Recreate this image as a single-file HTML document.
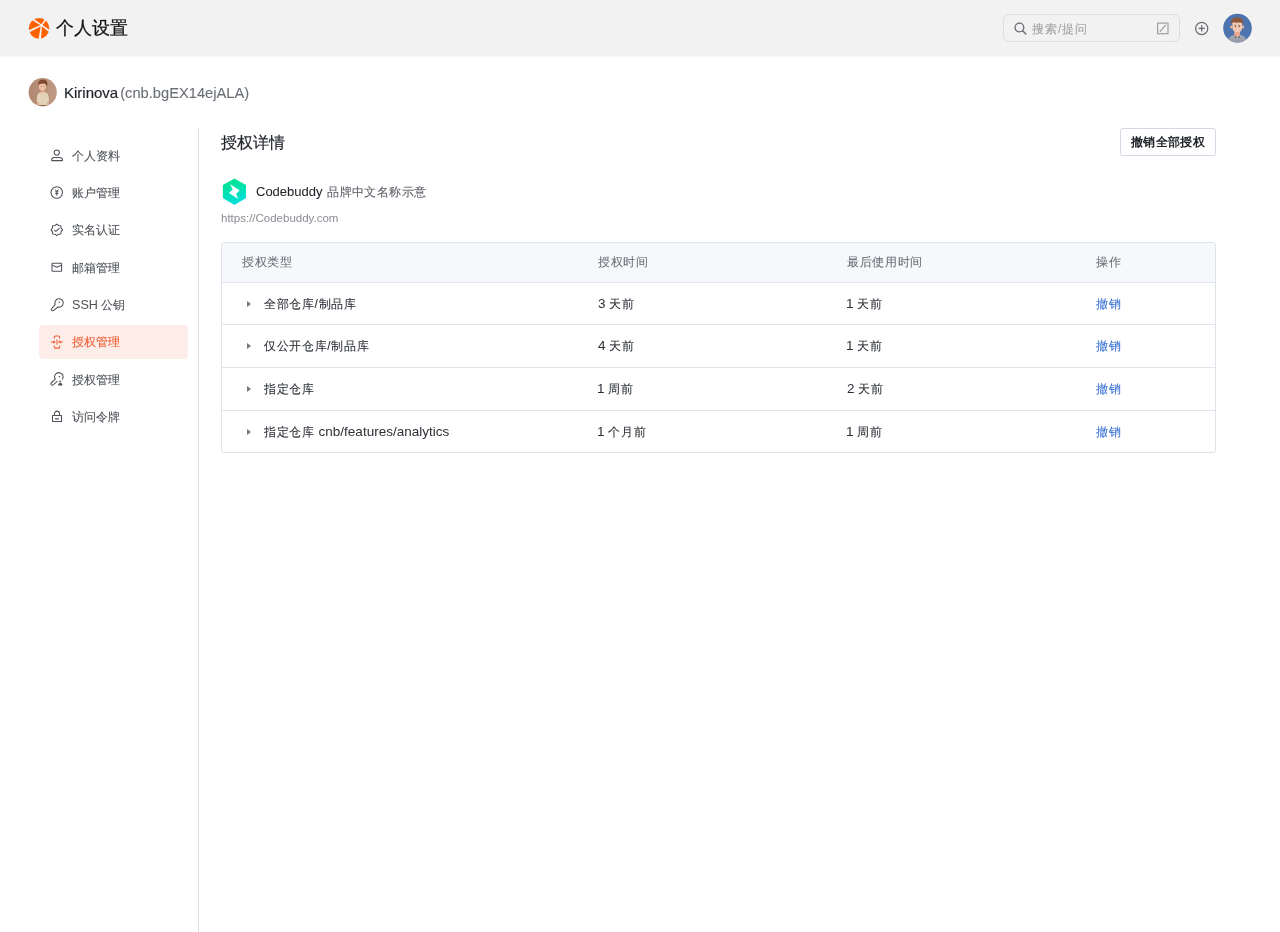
<!DOCTYPE html>
<html><head><meta charset="utf-8">
<style>
*{box-sizing:border-box;margin:0;padding:0}
html,body{width:1280px;height:932px;overflow:hidden;background:#fff;font-family:"Liberation Sans",sans-serif;color:#333}
.a{position:absolute;white-space:nowrap}
#hdr{left:0;top:0;width:1280px;height:56px;background:#f2f2f2}
#title{left:56px;top:16px;font-size:17.5px;line-height:24px;color:#111;-webkit-text-stroke:0.25px #111}
#search{left:1003px;top:14px;width:177px;height:28px;border:1px solid #dddddd;border-radius:6px}
#ph{left:1032px;top:21px;font-size:12px;line-height:16px;color:#a3a3a3;letter-spacing:1px;-webkit-text-stroke:0.1px #a3a3a3}
#user{left:64px;top:84px;font-size:15px;line-height:17px;color:#1f2329;-webkit-text-stroke:0.2px #1f2329}
#user span{font-size:14.7px;color:#6b6f76;margin-left:2px;-webkit-text-stroke:0.1px #6b6f76}
.nav{position:absolute;left:72px;font-size:12px;line-height:16px;color:#4e5258;white-space:nowrap;-webkit-text-stroke:0.1px currentColor}
.nav .l{font-size:12.6px;-webkit-text-stroke:0}
.nav.act{color:#ee5d36}
.ic{position:absolute;left:46px;width:24px;height:24px}
#actbg{left:39px;top:325px;width:149px;height:34px;background:#fcede8;border-radius:4px}
#vline{left:198px;top:128px;width:1px;height:804px;background:#dadfe7}
#h2{left:221px;top:131.5px;font-size:16px;line-height:22px;color:#1f2329;-webkit-text-stroke:0.2px #1f2329}
#btn{left:1120px;top:128px;width:96px;height:28px;border:1px solid #d3d9e4;border-radius:3px;font-size:12px;letter-spacing:0.4px;line-height:27px;text-align:center;font-weight:bold;color:#1f2329;background:#fff}
#cb{left:256px;top:184px;font-size:13px;line-height:16px;color:#1f2329;-webkit-text-stroke:0.05px #1f2329}
#cb span{font-size:12px;letter-spacing:0.45px;color:#5f636a;margin-left:1px;-webkit-text-stroke:0.12px #5f636a}
#url{left:221px;top:211px;font-size:11.5px;line-height:14px;color:#8a8d93}
#tbl{left:221px;top:242px;width:995px;height:211px;border:1px solid #dde2eb;border-radius:3px;overflow:hidden}
.row{position:absolute;left:0;width:993px;border-top:1px solid #e1e6ee}
.cell{position:absolute;font-size:12px;letter-spacing:0.65px;line-height:16px;white-space:nowrap;color:#2b2f36;-webkit-text-stroke:0.08px currentColor}
.cell .l{font-size:13.5px;letter-spacing:0;-webkit-text-stroke:0}
.th{color:#6b6f76}
.arr{position:absolute;left:24.6px;width:0;height:0;border-left:4.4px solid #75797f;border-top:3.2px solid transparent;border-bottom:3.2px solid transparent}
.lnk{color:#3a73d2}
</style></head><body><div id="root" style="position:absolute;left:0;top:0;width:1280px;height:932px;will-change:transform">
<div id="hdr" class="a"></div><div class="a" style="left:0;top:56px;width:1280px;height:1px;background:#f9f9f9"></div>
<!-- logo -->
<svg class="a" style="left:26px;top:16px" width="26" height="26" viewBox="0 0 26 26">
  <circle cx="13.05" cy="12.4" r="10.3" fill="#fe6100"/>
  <path fill="#f2f2f2" d="M15.93 8.70 L15.27 9.70 L1.59 1.36 L2.98 -0.72Z M16.08 9.56 L15.12 8.84 L24.10 -4.42 L26.11 -2.93Z M15.24 9.68 L15.96 8.72 L29.17 17.77 L27.67 19.77Z M15.01 9.12 L16.19 9.28 L14.69 25.22 L12.21 24.89Z M15.34 8.66 L15.86 9.74 L1.73 17.27 L0.64 15.02Z"/>
  <circle cx="15.6" cy="9.2" r="1.3" fill="#f2f2f2"/>
</svg>
<div id="title" class="a">个人设置</div>
<div id="search" class="a"></div>
<svg class="a" style="left:1012px;top:20px" width="18" height="18" viewBox="0 0 18 18">
  <circle cx="7.4" cy="7.5" r="4.4" fill="none" stroke="#676a70" stroke-width="1.3"/>
  <line x1="10.6" y1="10.7" x2="13.9" y2="14" stroke="#676a70" stroke-width="1.4" stroke-linecap="round"/>
</svg>
<div id="ph" class="a">搜索/提问</div>
<svg class="a" style="left:1156px;top:22px" width="13" height="13" viewBox="0 0 13 13">
  <rect x="1.6" y="1.1" width="10.4" height="10.6" fill="none" stroke="#a0a0a0" stroke-width="1.2"/>
  <line x1="3.8" y1="9.8" x2="9.8" y2="2.9" stroke="#999" stroke-width="1.1"/>
</svg>
<svg class="a" style="left:1193px;top:20px" width="18" height="18" viewBox="0 0 18 18">
  <circle cx="8.7" cy="8.4" r="6.1" fill="none" stroke="#6a6d73" stroke-width="1.25"/>
  <line x1="8.7" y1="5.3" x2="8.7" y2="11.5" stroke="#6a6d73" stroke-width="1.3"/>
  <line x1="5.6" y1="8.4" x2="11.8" y2="8.4" stroke="#6a6d73" stroke-width="1.3"/>
</svg>
<!-- header avatar -->
<svg class="a" style="left:1222px;top:13px" width="31" height="31" viewBox="0 0 31 31">
  <defs><clipPath id="ca"><circle cx="15.5" cy="15.15" r="14.3"/></clipPath>
  <linearGradient id="sh" x1="0" y1="0" x2="0" y2="1"><stop offset="0" stop-color="#a7abb8"/><stop offset="1" stop-color="#8f93a0"/></linearGradient></defs>
  <circle cx="15.5" cy="15.15" r="14.3" fill="#4d74ae"/>
  <g clip-path="url(#ca)">
    <path d="M4.5 31 Q5.5 23.5 12 22 L18.5 22 Q25 23.5 26 31 Z" fill="url(#sh)"/>
    <path d="M12.3 18 L18 18 L18.2 22.6 L15.2 24 L12.1 22.6 Z" fill="#e9a78d"/>
    <path d="M12.6 22.4 L14.3 24.4 L13.2 24.8 Z M17.8 22.4 L16.1 24.4 L17.2 24.8 Z" fill="#2d3240"/>
    <ellipse cx="9.3" cy="14" rx="1.1" ry="1.6" fill="#eeb39a"/>
    <ellipse cx="21.1" cy="14" rx="1.1" ry="1.6" fill="#eeb39a"/>
    <path d="M10.3 10.5 Q10.3 8.2 15.3 8.2 Q20.3 8.2 20.3 10.5 L20.1 15.5 Q19.6 19 15.3 19.2 Q11 19 10.5 15.5 Z" fill="#f3c8b2"/>
    <path d="M9.2 11.8 Q8.4 6.5 12 4.8 Q15.5 3.6 18.6 5 Q21.6 6.4 20.9 11.6 Q20 9.3 17.5 9.6 Q13.5 10 10.8 9.3 Q9.6 10 9.2 11.8 Z" fill="#8d583a"/>
    <path d="M12.4 12.4 L14.3 12.2 M16.3 12.2 L18.2 12.4" stroke="#6a4330" stroke-width="0.6"/>
    <ellipse cx="13.4" cy="13.6" rx="0.55" ry="0.65" fill="#2a2222"/>
    <ellipse cx="17.2" cy="13.6" rx="0.55" ry="0.65" fill="#2a2222"/>
  </g>
</svg>

<!-- user avatar -->
<svg class="a" style="left:28px;top:77px" width="30" height="30" viewBox="0 0 30 30">
  <defs><clipPath id="cu"><circle cx="14.7" cy="15.2" r="14.1"/></clipPath>
  <linearGradient id="ub" x1="0" y1="0" x2="1" y2="0"><stop offset="0" stop-color="#b08770"/><stop offset="1" stop-color="#c09a83"/></linearGradient></defs>
  <circle cx="14.7" cy="15.2" r="14.1" fill="url(#ub)"/>
  <g clip-path="url(#cu)">
    <path d="M9 24 L8.6 28.5 L10.6 28.8 L11 24 Z M19.6 24 L20 28.8 L21.2 28.5 L20.8 24 Z" fill="#e0a88e"/>
    <path d="M11.2 27.8 L18.8 27.8 L18.8 30 L11.2 30 Z" fill="#9a6a48"/>
    <path d="M8.7 24.5 Q8.6 18 10.5 16.2 Q12 15 13.5 14.9 L16 14.9 Q17.8 15 19.2 16.2 Q21 18 20.9 24.5 L19.5 24.7 L19.3 28 L10.7 28 L10.3 24.7 Z" fill="#e3d2b8"/>
    <path d="M13.4 12.4 L16 12.4 L16.2 15.2 Q14.7 16.2 13.2 15.2 Z" fill="#e6a88c"/>
    <ellipse cx="14.4" cy="9.6" rx="3.5" ry="3.9" fill="#f0c1a7"/>
    <path d="M10.2 8.6 Q9.6 3.6 14 2.6 Q18.6 2.2 19.4 6 Q19.8 8 18.6 9.2 Q18.2 6.8 16.2 6.6 Q13.5 6.8 11.2 7.2 Q10.6 7.8 10.2 8.6 Z" fill="#7f4a30"/>
    <circle cx="13.1" cy="9.6" r="0.45" fill="#3a2a22"/>
    <circle cx="15.9" cy="9.6" r="0.45" fill="#3a2a22"/>
  </g>
</svg>
<div id="user" class="a">Kirinova<span>(cnb.bgEX14ejALA)</span></div>

<div id="actbg" class="a"></div>
<!-- nav icons -->
<svg class="ic" style="top:144px" viewBox="0 0 24 24" fill="none" stroke="#4e5258" stroke-width="1.05">
  <circle cx="10.8" cy="8.6" r="2.6"/>
  <path d="M5.7 15.6 Q5.7 13.6 8.3 13.4 L13.6 13.4 Q16.3 13.6 16.4 15.6 L16.4 16.6 L5.7 16.6 Z" stroke-linejoin="round"/>
</svg>
<svg class="ic" style="top:181px" viewBox="0 0 24 24" fill="none" stroke="#4e5258" stroke-width="1.1">
  <circle cx="10.75" cy="11.45" r="5.75"/>
  <path d="M9.2 8.4 L10.8 10.6 L12.4 8.4 M10.8 10.6 L10.8 14.8 M9.2 10.8 L12.4 10.8 M9.2 12.5 L12.4 12.5" stroke-width="1"/>
</svg>
<svg class="ic" style="top:218px" viewBox="0 0 24 24" fill="none" stroke="#4e5258" stroke-width="1.05" stroke-linejoin="round">
  <path d="M10.75 6.10 L12.55 7.51 L14.82 7.78 L15.09 10.05 L16.50 11.85 L15.09 13.65 L14.82 15.92 L12.55 16.19 L10.75 17.60 L8.95 16.19 L6.68 15.92 L6.41 13.65 L5.00 11.85 L6.41 10.05 L6.68 7.78 L8.95 7.51 Z"/>
  <path d="M8.4 12.3 L9.8 13.4 L13.4 10.4" stroke-linecap="round"/>
</svg>
<svg class="ic" style="top:255px" viewBox="0 0 24 24" fill="none" stroke="#4e5258" stroke-width="1.05" stroke-linejoin="round">
  <rect x="6" y="8.3" width="9.6" height="8" rx="0.8"/>
  <path d="M6.2 10.1 L10.8 12.3 L15.4 10.1"/>
</svg>
<svg class="ic" style="top:293px" viewBox="0 0 24 24" fill="none" stroke="#4e5258" stroke-width="1.05" stroke-linejoin="round">
  <path d="M9.2 11.6 A4.2 4.2 0 1 1 12 14 L7.6 17.3 Q6.2 18.3 5.4 17.2 Q4.8 16.2 6 15.1 Z"/>
  <circle cx="13.3" cy="9.3" r="0.75" fill="#4e5258" stroke="none"/>
</svg>
<svg class="ic" style="top:330px" viewBox="0 0 24 24" fill="none" stroke="#ee5d36" stroke-width="1.05">
  <path d="M8.3 8.5 L8.3 6.9 Q8.3 5.9 9.3 5.9 L12.7 5.9 Q13.7 5.9 13.7 6.9 L13.7 8.5"/>
  <path d="M8.3 15.5 L8.3 17.1 Q8.3 18.1 9.3 18.1 L12.7 18.1 Q13.7 18.1 13.7 17.1 L13.7 15.5"/>
  <path d="M11 9.3 L11 14.7"/>
  <path d="M5 12 L8.5 12 M13.3 12 L16.9 12"/>
  <path d="M7.6 10.8 L9.3 12 L7.6 13.2 Z M14.2 10.8 L12.5 12 L14.2 13.2 Z" fill="#ee5d36" stroke-width="0.6"/>
</svg>
<svg class="ic" style="top:367px" viewBox="0 0 24 24" fill="none" stroke="#4e5258" stroke-width="1.05" stroke-linejoin="round">
  <path d="M9.6 12.3 A4.3 3.9 0 1 1 16 12.4 M11.4 14.2 L7.5 17.6 Q6 18.7 5 17.5 Q4.4 16.6 5.6 15.5 L9.4 12.1"/>
  <circle cx="13.4" cy="9.7" r="0.8" fill="#4e5258" stroke="none"/>
  <circle cx="14.1" cy="14.5" r="0.9" fill="#4e5258" stroke="none"/>
  <path d="M12.6 18 Q12.6 16.6 14.2 16.6 Q15.9 16.6 15.9 18 Z" fill="#4e5258"/>
</svg>
<svg class="ic" style="top:404px" viewBox="0 0 24 24" fill="none" stroke="#4e5258" stroke-width="1.05" stroke-linejoin="round">
  <path d="M8.5 11.4 L8.5 9.6 A2.5 2.5 0 0 1 13.5 9.6 L13.5 11.4"/>
  <rect x="6.5" y="11.5" width="9" height="6"/>
  <path d="M9.4 14.8 L12.5 14.8" stroke-width="1.2" stroke-linecap="round"/>
</svg>

<div class="nav" style="top:147.75px">个人资料</div>
<div class="nav" style="top:185.08px">账户管理</div>
<div class="nav" style="top:222.41px">实名认证</div>
<div class="nav" style="top:259.74px">邮箱管理</div>
<div class="nav" style="top:297.07px"><span class="l">SSH</span> 公钥</div>
<div class="nav act" style="top:334.40px">授权管理</div>
<div class="nav" style="top:371.73px">授权管理</div>
<div class="nav" style="top:409.06px">访问令牌</div>
<div id="vline" class="a"></div>

<div id="h2" class="a">授权详情</div>
<div id="btn" class="a">撤销全部授权</div>
<svg class="a" style="left:220px;top:176px" width="30" height="32" viewBox="0 0 30 32">
  <defs><linearGradient id="g1" x1="0" y1="0" x2="0.25" y2="1">
    <stop offset="0" stop-color="#00e486"/><stop offset="1" stop-color="#00e0d8"/></linearGradient></defs>
  <path d="M14.4 3.4 L25.3 9.25 L25.3 21.65 L14.4 28.15 L3.5 21.65 L3.5 9.25 Z" fill="url(#g1)" stroke="url(#g1)" stroke-width="1.3" stroke-linejoin="round"/>
  <path d="M10.4 8.5 L19.5 14.4 L16 17.8 L17.8 22.6 L9.2 17.1 L12.8 13.4 Z" fill="#fff" stroke="#fff" stroke-width="0.3" stroke-linejoin="round"/>
</svg>
<div id="cb" class="a">Codebuddy <span>品牌中文名称示意</span></div>
<div id="url" class="a">https://Codebuddy.com</div>

<div id="tbl" class="a">
  <div class="row" style="top:0;height:40px;background:#f7f8fb;border-top:none">
    <div class="cell th" style="left:20px;top:10.9px">授权类型</div>
    <div class="cell th" style="left:376px;top:10.9px">授权时间</div>
    <div class="cell th" style="left:625px;top:10.9px">最后使用时间</div>
    <div class="cell th" style="left:874px;top:10.9px">操作</div>
  </div>
  <div class="row" style="top:39px;height:43px">
    <div class="arr" style="top:18px"></div>
    <div class="cell" style="left:42px;top:12.9px">全部仓库/制品库</div>
    <div class="cell" style="left:376px;top:12.9px"><span class="l">3</span> 天前</div>
    <div class="cell" style="left:625px;top:12.9px"><span class="l" style="margin-left:-1px">1</span> 天前</div>
    <div class="cell lnk" style="left:874px;top:12.9px">撤销</div>
  </div>
  <div class="row" style="top:81px;height:43px">
    <div class="arr" style="top:18px"></div>
    <div class="cell" style="left:42px;top:12.9px">仅公开仓库/制品库</div>
    <div class="cell" style="left:376px;top:12.9px"><span class="l">4</span> 天前</div>
    <div class="cell" style="left:625px;top:12.9px"><span class="l" style="margin-left:-1px">1</span> 天前</div>
    <div class="cell lnk" style="left:874px;top:12.9px">撤销</div>
  </div>
  <div class="row" style="top:124px;height:43px">
    <div class="arr" style="top:18px"></div>
    <div class="cell" style="left:42px;top:12.9px">指定仓库</div>
    <div class="cell" style="left:376px;top:12.9px"><span class="l" style="margin-left:-1px">1</span> 周前</div>
    <div class="cell" style="left:625px;top:12.9px"><span class="l">2</span> 天前</div>
    <div class="cell lnk" style="left:874px;top:12.9px">撤销</div>
  </div>
  <div class="row" style="top:167px;height:43px">
    <div class="arr" style="top:18px"></div>
    <div class="cell" style="left:42px;top:12.9px">指定仓库 <span class="l">cnb/features/analytics</span></div>
    <div class="cell" style="left:376px;top:12.9px"><span class="l" style="margin-left:-1px">1</span> 个月前</div>
    <div class="cell" style="left:625px;top:12.9px"><span class="l" style="margin-left:-1px">1</span> 周前</div>
    <div class="cell lnk" style="left:874px;top:12.9px">撤销</div>
  </div>
</div>
</div></body></html>
